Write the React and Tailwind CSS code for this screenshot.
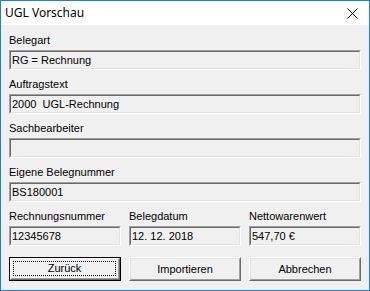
const Field = ({ value }) => (
  <div className="h-[20px] border-t border-l border-t-[#a0a0a0] border-l-[#a0a0a0] border-b border-r border-b-white border-r-white">
    <div className="h-full border-t border-l border-t-[#696969] border-l-[#696969] border-b border-r border-b-[#e3e3e3] border-r-[#e3e3e3] bg-[#f0f0f0] pl-[1px] text-[11px] leading-[16px] text-black whitespace-pre">
      {value}
    </div>
  </div>
);

const Labeled = ({ label, value }) => (
  <div className="flex flex-col">
    <div className="h-[13px] text-[11px] leading-[13px] text-black">{label}</div>
    <div className="mt-[3px]">
      <Field value={value} />
    </div>
  </div>
);

const Button = ({ children, isDefault }) =>
  isDefault ? (
    <div className="h-[24px] border border-black">
      <div className="h-full border-t border-l border-t-white border-l-white border-b border-r border-b-[#696969] border-r-[#696969]">
        <div className="h-full border-b border-r border-b-[#a0a0a0] border-r-[#a0a0a0] bg-[#f0f0f0] p-[2px]">
          <div className="h-full border border-dotted border-black flex items-center justify-center text-[11px] text-black">
            {children}
          </div>
        </div>
      </div>
    </div>
  ) : (
    <div className="h-[24px] border-t border-l border-t-white border-l-white border-b border-r border-b-[#696969] border-r-[#696969]">
      <div className="h-full border-t border-l border-t-[#e3e3e3] border-l-[#e3e3e3] border-b border-r border-b-[#a0a0a0] border-r-[#a0a0a0] bg-[#f0f0f0] flex items-center justify-center text-[11px] text-black">
        {children}
      </div>
    </div>
  );

export default function App() {
  return (
    <div
      className="w-[370px] h-[291px] border border-[#1883d7] bg-[#f0f0f0] flex flex-col"
      style={{ fontFamily: '"Liberation Sans", Arial, sans-serif' }}
    >
      {/* Title bar */}
      <div className="h-[24px] bg-white flex items-center justify-between pl-[4px] pr-[11px]">
        <span
          className="text-[12px] text-black"
          style={{ fontFamily: '"Noto Sans", sans-serif' }}
        >
          UGL Vorschau
        </span>
        <svg width="11" height="11" viewBox="0 0 11 11">
          <path d="M0.5 0.5 L10.5 10.5 M10.5 0.5 L0.5 10.5" stroke="#000" strokeWidth="1" fill="none" />
        </svg>
      </div>

      <div className="flex flex-col px-[8px] pt-[9px] gap-[8px]">
        <Labeled label="Belegart" value="RG = Rechnung" />
        <Labeled label="Auftragstext" value="2000  UGL-Rechnung" />
        <Labeled label="Sachbearbeiter" value="" />
        <Labeled label="Eigene Belegnummer" value="BS180001" />
        <div className="grid grid-cols-3 gap-x-[8px]">
          <Labeled label="Rechnungsnummer" value="12345678" />
          <Labeled label="Belegdatum" value="12. 12. 2018" />
          <Labeled label="Nettowarenwert" value="547,70 €" />
        </div>
        <div className="grid grid-cols-3 gap-x-[8px] mt-[3px]">
          <Button isDefault>Zurück</Button>
          <Button>Importieren</Button>
          <Button>Abbrechen</Button>
        </div>
      </div>
    </div>
  );
}
